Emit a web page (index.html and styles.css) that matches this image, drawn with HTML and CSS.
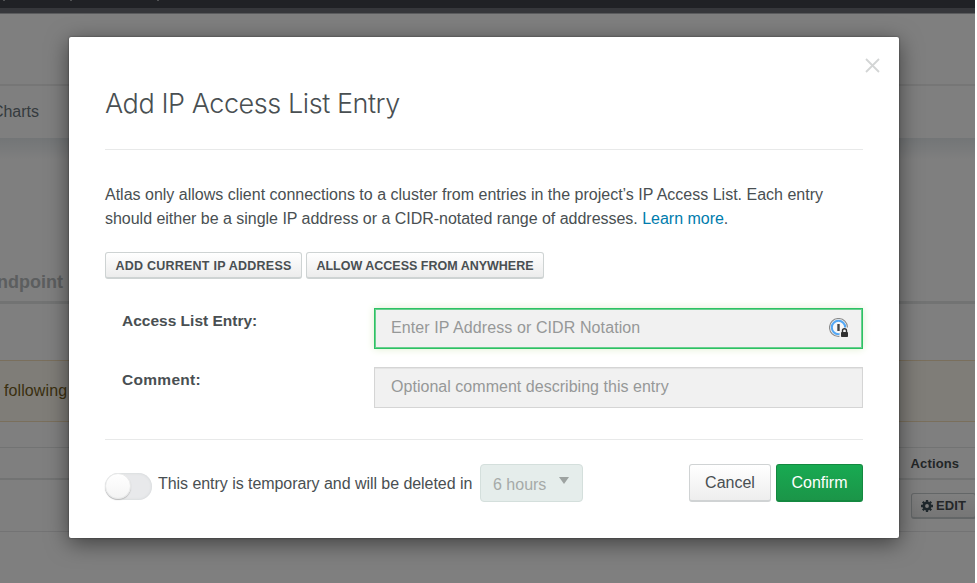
FILE: index.html
```html
<!DOCTYPE html>
<html lang="en">
<head>
<meta charset="utf-8">
<title>Add IP Access List Entry</title>
<link rel="stylesheet" href="styles.css">
</head>
<body>
<div class="stage">
  <div class="page">
    <div class="topbar"><i></i><i></i><i></i></div>
    <div class="subbar"></div>
    <div class="header"></div>
    <nav class="tabs"><span>Charts</span></nav>
    <div class="section-head"><span>ndpoint</span></div>
    <div class="gap"></div>
    <div class="notice"><span>following</span></div>
    <div class="table-head"><span>Actions</span></div>
    <div class="table-row">
      <button class="edit">
        <svg width="12" height="12" viewBox="0 0 12 12"><g fill="none" stroke="#3d4f58"><circle cx="6" cy="6" r="3.2" stroke-width="2.6"/><path stroke-width="2.3" d="M6 0v2M6 10v2M0 6h2M10 6h2M1.8 1.8l1.4 1.4M8.8 8.8l1.4 1.4M10.2 1.8L8.8 3.2M3.2 8.8l-1.4 1.4"/></g></svg><span>EDIT</span>
      </button>
    </div>
  </div>
  <div class="overlay">
    <div class="modal">
      <svg class="close" width="15" height="15" viewBox="0 0 15 15"><path d="M1 1l13 13M14 1L1 14" stroke="#d3d5d5" stroke-width="1.8" fill="none"/></svg>
      <h1><span>Add IP Access List Entry</span></h1>
      <div class="copy">
        <div class="copy-a">Atlas only allows client connections to a cluster from entries in the project’s IP Access List. Each entry</div>
        <div class="copy-b">should either be a single IP address or a CIDR-notated range of addresses. <a>Learn more</a>.</div>
      </div>
      <div class="quick">
        <button class="small current"><span>ADD CURRENT IP ADDRESS</span></button>
        <button class="small anywhere"><span>ALLOW ACCESS FROM ANYWHERE</span></button>
      </div>
      <div class="field">
        <label class="label-entry">Access List Entry:</label>
        <div class="input focus"><span class="ph-entry">Enter IP Address or CIDR Notation</span>
          <svg width="20" height="20" viewBox="0 0 20 20"><circle cx="9.5" cy="9.5" r="9" fill="none" stroke="#8b8b8b" stroke-width="1.1"/><circle cx="9.5" cy="9.5" r="6.7" fill="#f8f8f8" stroke="#54a8f5" stroke-width="2.1"/><path d="M9.5 6v7" stroke="#444" stroke-width="2.4"/><path d="M10.5 14l2.5-4.5h7v11h-9.5z" fill="#f1f1f1"/><path d="M13.5 14v-1.2a2 2 0 0 1 4 0V14" fill="none" stroke="#333" stroke-width="1.4"/><rect x="12" y="14" width="7" height="5" rx=".8" fill="#303030"/></svg>
        </div>
      </div>
      <div class="field second">
        <label class="label-comment">Comment:</label>
        <div class="input"><span class="ph-comment">Optional comment describing this entry</span></div>
      </div>
      <div class="footer">
        <div class="toggle"><i></i></div>
        <span class="temp">This entry is temporary and will be deleted in</span>
        <div class="select"><span>6 hours</span><i></i></div>
        <button class="cancel"><span>Cancel</span></button>
        <button class="confirm"><span>Confirm</span></button>
      </div>
    </div>
  </div>
</div>
</body>
</html>
```
FILE: styles.css
```css
* { box-sizing: border-box; }
body { margin: 0; background: #fff; font-family: "Liberation Sans", Arial, sans-serif; color: #494f52; overflow: hidden; }
button { font-family: inherit; margin: 0; padding: 0; color: inherit; }
span, label { white-space: nowrap; }
.stage { position: relative; width: 975px; height: 583px; overflow: hidden; background: #fff; }
.page { display: flex; flex-direction: column; }
.topbar { height: 8px; background: #40424a; display: flex; padding-left: 3px; gap: 65px; }
.topbar i { width: 2px; height: 1px; background: #a0a2a6; }
.topbar i:nth-child(3) { margin-left: 20px; }
.subbar { height: 6px; background: #6c6e76; border-bottom: 1px solid #b5b7ba; }
.header { height: 72px; border-bottom: 2px solid #ececec; }
.tabs { height: 52px; display: flex; width: 100%; align-items: center; font-size: 16px; color: #6b767c; }
.tabs span { width: 39px; display: flex; justify-content: flex-end; }
.section-head { height: 166px; border-bottom: 3px solid #e4e6e7; background: linear-gradient(#e6ebee, #fff 22px); display: flex; align-items: flex-end; padding-bottom: 9px; font-weight: bold; font-size: 18px; line-height: 20px; color: #b8bcbe; }
.section-head span { width: 63px; display: flex; justify-content: flex-end; }
.gap { height: 56px; }
.notice { height: 62px; background: #fefaf0; border: solid #f5deb8; border-width: 1px 0; color: #755f22; display: flex; align-items: center; font-size: 16px; padding-left: 4px; letter-spacing: .1px; }
.table-head { margin-top: 25px; height: 33px; border: solid #e4e6e7; border-width: 1px 0 2px; display: flex; align-items: center; padding-left: 910.5px; font-weight: bold; font-size: 13px; color: #464c4f; letter-spacing: .15px; }
.table-row { height: 52px; border-bottom: 1px solid #e6e7e8; padding: 13px 0 0 911px; }
.edit { width: 65px; height: 26px; border: 1px solid #c7cccf; border-bottom-width: 2px; border-radius: 3px; background: linear-gradient(#fff, #ededed); display: flex; align-items: center; padding-left: 9px; gap: 3px; font-weight: bold; font-size: 13px; letter-spacing: .1px; }
.overlay { position: absolute; inset: 0; background: rgba(0,0,0,.5); }
.modal { margin: 37px 0 0 69px; width: 830px; height: 501px; background: #fff; border-radius: 2px; box-shadow: 0 5px 22px rgba(0,0,0,.5), 0 0 2px rgba(0,0,0,.5); padding: 0 36px; position: relative; display: flow-root; }
.close { position: absolute; right: 19px; top: 21px; }
h1 { margin: 0; height: 113px; border-bottom: 1px solid #e8e9e9; font: 300 27px/34px Inter, sans-serif; padding-top: 50px; color: #494f52; letter-spacing: -.44px; }
.copy { margin-top: 33px; font-size: 16px; line-height: 24px; white-space: nowrap; }
.copy-b { letter-spacing: -.02px; }
.copy a { color: #007cad; }
.quick { display: flex; gap: 4px; margin-top: 21px; }
.small { height: 27px; width: 197px; border: 1px solid #ced3d3; border-bottom-width: 2px; border-radius: 3px; background: linear-gradient(#fff, #ececec); font-size: 12.5px; font-weight: bold; display: flex; justify-content: center; align-items: center; padding-top: 1px; }
.current { letter-spacing: .24px; }
.anywhere { width: 238px; }
.field { display: flex; justify-content: space-between; margin-top: 29px; padding-left: 17px; }
.second { margin-top: 18px; }
label { font-weight: bold; font-size: 15.5px; line-height: 26px; }
.label-comment { letter-spacing: .3px; }
.input { width: 489px; height: 41px; background: #f1f1f1; border: 1px solid #d5d5d5; display: flex; justify-content: space-between; align-items: center; padding: 0 13px 1px 16px; font-size: 16px; color: #969898; box-shadow: inset 0 1px 1px #e3e3e3; }
.ph-entry { letter-spacing: .1px; }
.ph-comment { letter-spacing: .03px; }
.focus { border: 1px solid #2cc264; padding: 0 13px 1px 16px; box-shadow: inset 0 0 0 1px #69cf8e, 0 0 8px #e0efcf; }
.footer { display: flex; border-top: 1px solid #e8e9e9; margin-top: 31px; padding-top: 24px; }
.toggle { margin-top: 9px; width: 47px; height: 27px; border-radius: 14px; background: #e8e9eb; box-shadow: inset 0 0 3px #cfd3d5; }
.toggle i { display: block; width: 26px; height: 26px; border-radius: 50%; background: linear-gradient(#fff, #f4f4f4); border: 1px solid #e8e9e9; box-shadow: 0 1px 1px #bbb; }
.temp { width: 322px; margin-left: 6px; font-size: 16px; line-height: 40px; letter-spacing: -.05px; }
.select { width: 103px; height: 38px; background: #e5edeb; border: 1px solid #d4dfdc; border-radius: 4px; display: flex; justify-content: space-between; padding: 0 13px 0 12px; font-size: 16px; line-height: 40px; color: #a5aaa8; }
.select i { margin-top: 12px; height: 0; border: 5px solid transparent; border-top: 7px solid #9da3a1; border-bottom: 0; }
.cancel, .confirm { height: 38px; border-radius: 3px; font-size: 16px; display: flex; justify-content: center; align-items: center; }
.cancel { width: 82px; margin-left: auto; border: 1px solid #d0d3d4; border-bottom-width: 2px; background: linear-gradient(#fff, #eee); }
.confirm { width: 87px; margin-left: 5px; border: 1px solid #148940; border-bottom-width: 2px; background: linear-gradient(#18aa52, #1b9548); color: #fff; }
```
